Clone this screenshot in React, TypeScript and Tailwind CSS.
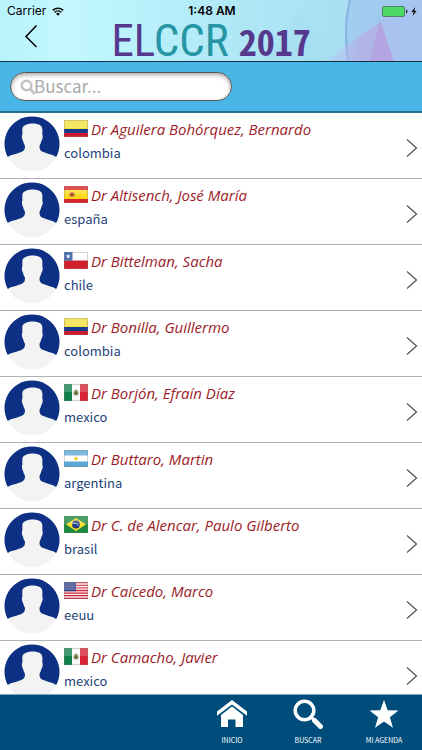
import React from "react";

type Country = "colombia" | "españa" | "chile" | "mexico" | "argentina" | "brasil" | "eeuu";

interface Speaker {
  name: string;
  country: Country;
}

const speakers: Speaker[] = [
  { name: "Dr Aguilera Bohórquez, Bernardo", country: "colombia" },
  { name: "Dr Altisench, José María", country: "españa" },
  { name: "Dr Bittelman, Sacha", country: "chile" },
  { name: "Dr Bonilla, Guillermo", country: "colombia" },
  { name: "Dr Borjón, Efraín Díaz", country: "mexico" },
  { name: "Dr Buttaro, Martin", country: "argentina" },
  { name: "Dr C. de Alencar, Paulo Gilberto", country: "brasil" },
  { name: "Dr Caicedo, Marco", country: "eeuu" },
  { name: "Dr Camacho, Javier", country: "mexico" },
];

function FlagArt({ country }: { country: Country }) {
  switch (country) {
    case "colombia":
      return (
        <>
          <rect width="24" height="9" fill="#f3e03c" />
          <rect y="9" width="24" height="4" fill="#123a8e" />
          <rect y="13" width="24" height="4" fill="#cf1a2b" />
        </>
      );
    case "españa":
      return (
        <>
          <rect width="24" height="17" fill="#d8232a" />
          <rect y="4" width="24" height="9" fill="#fbdc1c" />
          <circle cx="8" cy="8.5" r="2.4" fill="#c8672c" />
          <path d="M5.5 7v4M10.5 7v4" stroke="#c99a50" strokeWidth="0.8" />
          <circle cx="8" cy="8.6" r="1" fill="#8d2c22" />
        </>
      );
    case "chile":
      return (
        <>
          <rect width="24" height="17" fill="#fff" />
          <rect y="8.5" width="24" height="8.5" fill="#d0202c" />
          <rect width="8.5" height="8.5" fill="#2450a0" />
          <path d="M4.2 2l.6 1.6h1.7L5.1 4.7l.5 1.7-1.4-1-1.4 1 .5-1.7L1.9 3.6h1.7z" fill="#fff" />
        </>
      );
    case "mexico":
      return (
        <>
          <rect width="24" height="17" fill="#f8f8f5" />
          <rect width="8" height="17" fill="#12824a" />
          <rect x="16" width="8" height="17" fill="#da2436" />
          <ellipse cx="12" cy="8.6" rx="2.6" ry="2.8" fill="#a9b58c" />
          <path d="M9.600 9a2.500 2.600 0 0 0 4.800 0" fill="none" stroke="#5c8a55" strokeWidth="1" />
          <ellipse cx="12" cy="8" rx="1.500" ry="2" fill="#7d5a3a" />
        </>
      );
    case "argentina":
      return (
        <>
          <rect width="24" height="17" fill="#5aa9d6" />
          <rect y="5.5" width="24" height="6" fill="#fff" />
          <circle cx="12" cy="8.5" r="2" fill="#f0d54b" />
        </>
      );
    case "brasil":
      return (
        <>
          <rect width="24" height="17" fill="#1c8a3e" />
          <path d="M12 2l10 6.5L12 15 2 8.5z" fill="#f7df25" />
          <circle cx="12" cy="8.5" r="3.9" fill="#203c86" />
          <path d="M8.4 7.4c2.6-.5 5.3.4 7 2.7" fill="none" stroke="#dfe8f4" strokeWidth="0.8" />
        </>
      );
    case "eeuu":
      return (
        <>
          <rect width="24" height="17" fill="#f6e9ea" />
          <path
            d="M0 .7h24M0 3.3h24M0 5.9h24M0 8.5h24M0 11.1h24M0 13.7h24M0 16.3h24"
            stroke="#cf2b3c"
            strokeWidth="1.3"
          />
          <rect width="12" height="9.2" fill="#2f3f85" />
          <path d="M1.5 2h10M1.5 4.5h10M1.5 7h10" stroke="#8a94c4" strokeWidth="0.8" strokeDasharray="0.9 1.1" />
        </>
      );
  }
}

function Flag({ country }: { country: Country }) {
  return (
    <svg viewBox="0 0 24 17" className="h-[17px] w-6 shrink-0" aria-hidden="true">
      <FlagArt country={country} />
      <rect width="24" height="8" fill="#fff" opacity="0.2" />
      <rect x="0.5" y="0.5" width="23" height="16" fill="none" stroke="#777" strokeOpacity="0.3" />
    </svg>
  );
}

function Avatar() {
  return (
    <svg viewBox="0 0 56 56" className="size-14 shrink-0" aria-hidden="true">
      <circle cx="28" cy="28" r="27.500" fill="#f3f3f4" />
      {/* Blue backdrop: the part of the disc around the head and above the shoulders */}
      <path
        d="M3.800 41A27.500 27.500 0 1 1 52.200 41C48.500 38.300 43 38 38.600 35.800C35.800 34.400 35.300 32.500 35.600 29.500C36.600 28 37.200 26.300 37.500 24.500C38.500 24.200 39.200 19.200 38.300 18.800L38.400 13.500C38.300 10.300 36.500 9.300 34 8.300C31 7.200 25.500 7.300 22 8.800C19 10 18.300 11.500 18.300 14L18.400 18.800C17.400 19.200 18 24.200 19 24.500C19.300 26.300 19.800 28 20.900 29.500C21.200 32.500 20.600 34.400 17.800 35.800C13.500 38 7.500 38.300 3.800 41z"
        fill="#0d3084"
      />
    </svg>
  );
}

function SpeakerRow({ speaker }: { speaker: Speaker }) {
  return (
    <li className="border-b border-[#b0b0b0]">
      <a href="#ficha" className="flex h-[65px] items-start pt-[3px] pr-1 pl-1">
        <Avatar />
        <div className="ml-1 min-w-0 flex-1">
          <div className="flex h-[25px] items-center gap-[3px]">
            <Flag country={speaker.country} />
            <span className="truncate font-['Open_Sans','Noto_Sans',sans-serif] text-[15px] leading-6 text-[#9c1c28] italic">
              {speaker.name}
            </span>
          </div>
          <div className="text-[13px] leading-6 text-[#1c4379]">{speaker.country}</div>
        </div>
        <svg viewBox="0 0 12 20" className="mt-[22px] h-5 w-3 shrink-0" aria-hidden="true">
          <path d="M1 1.500L10.500 10 1 18.500" fill="none" stroke="#5c5558" strokeWidth="1.300" />
        </svg>
      </a>
    </li>
  );
}

function HeaderArt() {
  return (
    <svg
      viewBox="0 0 422 61"
      preserveAspectRatio="none"
      className="absolute inset-0 h-full w-full"
      aria-hidden="true"
    >
      <defs>
        <linearGradient id="sky" x1="0" x2="1">
          <stop offset="0" stopColor="#b8f3fc" />
          <stop offset="0.15" stopColor="#c3f8fe" />
          <stop offset="0.5" stopColor="#b2eaf8" />
          <stop offset="0.8" stopColor="#a9dff3" />
          <stop offset="1" stopColor="#a5cdf0" />
        </linearGradient>
        <linearGradient id="violet" x1="0" x2="1">
          <stop offset="0" stopColor="#c0bdec" stopOpacity="0.3" />
          <stop offset="0.4" stopColor="#b9a8e4" />
          <stop offset="1" stopColor="#a9bdee" />
        </linearGradient>
      </defs>
      <rect width="422" height="61" fill="url(#sky)" />
      <path d="M262 61L298 14l50 47z" fill="#a2dbef" opacity="0.4" />
      <path d="M350 0h72v61h-75c-3-20-2-40 3-61z" fill="#9cc4ec" opacity="0.65" />
      <path d="M350 0c-5 20-5 40-2 61" fill="none" stroke="#86b3e4" strokeWidth="2" />
      <path d="M326 61L410 0h12v61z" fill="url(#violet)" opacity="0.7" />
      <path d="M380 20l14 41h-24z" fill="#ba93dc" opacity="0.5" />
      <path d="M380 20L410 0h12v61h-28z" fill="#a6c6f1" opacity="0.7" />
    </svg>
  );
}

function Header() {
  return (
    <header className="relative h-[62px] shrink-0 border-b border-[#123244]">
      <HeaderArt />
      <div className="relative grid grid-cols-3 items-center pt-[3px] pr-[5px] pl-[7px] font-['Inter',sans-serif] text-[12px] leading-4 text-black">
        <div className="flex items-center gap-[6px]">
          <span>Carrier</span>
          <svg viewBox="0 0 12 9" className="h-[9px] w-3" aria-hidden="true">
            <path
              d="M.7 3.400a7.600 7.600 0 0 1 10.600 0M2.600 5.400a4.900 4.900 0 0 1 6.800 0"
              fill="none"
              stroke="#111"
              strokeWidth="1.500"
            />
            <path d="M6 8.800L4 6.800a2.900 2.900 0 0 1 4 0z" fill="#111" />
          </svg>
        </div>
        <span className="text-center font-semibold">1:48 AM</span>
        <div className="flex items-center justify-end gap-[3px]">
          <svg viewBox="0 0 26 11" className="h-[11px] w-[26px]" aria-hidden="true">
            <rect x="0.500" y="0.500" width="22" height="10" rx="1.500" fill="#4cd964" stroke="#54806a" />
            <path d="M24 3.500c2 .5 2 3.500 0 4z" fill="#333" />
          </svg>
          <svg viewBox="0 0 6 9" className="h-[9px] w-[6px]" aria-hidden="true">
            <path d="M4.200 0L.3 5h2.200l-.8 4 4-5.200H3.400z" fill="#111" />
          </svg>
        </div>
      </div>
      <div className="relative grid h-[42px] grid-cols-[92px_1fr_92px] items-center">
        <button type="button" aria-label="Volver" className="-mt-2 ml-6 h-6 w-4">
          <svg viewBox="0 0 14 24" className="h-6 w-[14px]" aria-hidden="true">
            <path d="M12.500 1.500L2 12.500l10.500 10.500" fill="none" stroke="#000" strokeWidth="1.500" />
          </svg>
        </button>
        <h1 className="flex items-baseline justify-center gap-[10px] font-['Roboto_Condensed','Roboto',sans-serif] leading-10 whitespace-nowrap">
          <span className="text-[45px] text-[#2795a5]">
            <span className="text-[#56388c]">EL</span>CCR
          </span>
          <span className="font-['Noto_Sans_Mono_CJK_SC','Roboto_Condensed',sans-serif] text-[36px] font-bold text-[#56388c]">
            2017
          </span>
        </h1>
      </div>
    </header>
  );
}

function SearchBar() {
  return (
    <form className="shrink-0 border-b-2 border-[#2c6e8f] bg-[#49b6e8] py-[10px] pr-2 pl-[10px]">
      <label className="flex h-[29px] w-[222px] items-center rounded-full border border-[#555] bg-white pr-3 pl-[9px] shadow-[inset_0_2px_4px_rgba(0,0,0,0.35)]">
        <svg viewBox="0 0 16 16" className="size-4 shrink-0" aria-hidden="true">
          <circle cx="6.500" cy="6.500" r="4.800" fill="none" stroke="#c4c4c4" strokeWidth="2.600" />
          <path d="M10 10l5 5" stroke="#c4c4c4" strokeWidth="3" />
        </svg>
        <input
          type="text"
          aria-label="Buscar"
          placeholder="Buscar..."
          className="-ml-[2px] min-w-0 flex-1 bg-transparent pb-[2px] text-[17px] leading-6 text-gray-700 outline-none placeholder:text-[#a9a9a9]"
        />
      </label>
    </form>
  );
}

function TabButton({ label, children }: { label: string; children: React.ReactNode }) {
  return (
    <button type="button" className="flex w-[76px] flex-col items-center pt-1 text-white">
      <svg viewBox="0 0 30 30" className="size-[30px]" fill="currentColor" aria-hidden="true">
        {children}
      </svg>
      <span className="mt-1 text-[7px] leading-[14px]">{label}</span>
    </button>
  );
}

function TabBar() {
  return (
    <nav className="flex h-14 shrink-0 justify-end border-t border-[#7fa3bd] bg-[#004d7b]">
      <TabButton label="INICIO">
        <path d="M15 1L0 12.500v4.200L15 5.500l15 11.200v-4.200z" />
        <path d="M15 7.500L4 16v12h7v-7.500h7.500V28H26V16z" />
      </TabButton>
      <TabButton label="BUSCAR">
        <circle cx="11.500" cy="11.500" r="9.300" fill="none" stroke="currentColor" strokeWidth="3.500" />
        <path d="M18 18l3 3" stroke="currentColor" strokeWidth="3" />
        <path d="M21.500 21.500l6 6" stroke="currentColor" strokeWidth="5" strokeLinecap="round" />
      </TabButton>
      <TabButton label="MI AGENDA">
        <path d="M15 1l3.700 10.300 10.800.2-8.600 6.700L24 28.800l-9-6.200-9 6.200 3.100-10.600L.5 11.500l10.800-.2z" />
      </TabButton>
    </nav>
  );
}

export default function App() {
  return (
    <div className="flex h-screen flex-col overflow-hidden bg-white font-['Noto_Sans_CJK_SC',sans-serif]">
      <Header />
      <SearchBar />
      <main className="min-h-0 flex-1 overflow-hidden">
        <ul>
          {speakers.map((speaker) => (
            <SpeakerRow key={speaker.name} speaker={speaker} />
          ))}
        </ul>
      </main>
      <TabBar />
    </div>
  );
}
